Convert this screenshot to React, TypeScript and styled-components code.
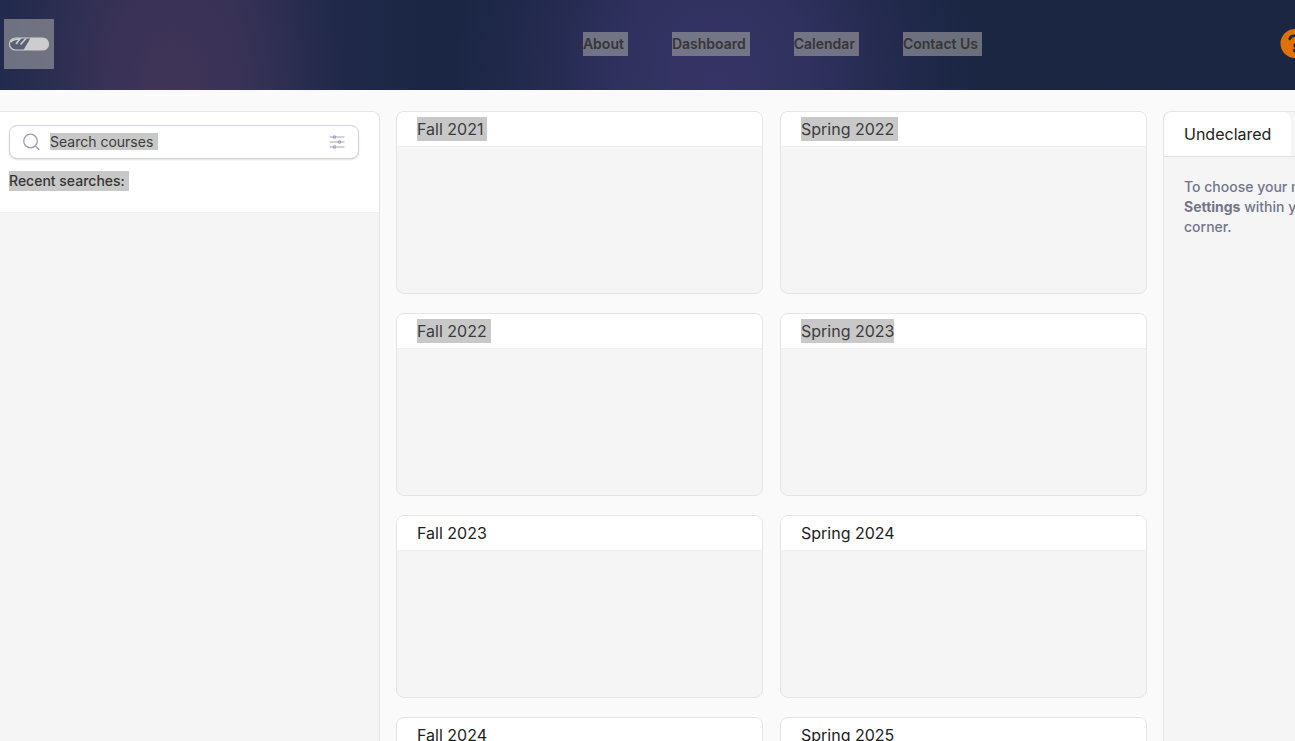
import React from "react";
import styled, { createGlobalStyle, css } from "styled-components";

const GlobalStyle = createGlobalStyle`
  *, *::before, *::after { box-sizing: border-box; }
  html, body, #root { height: 100%; }
  body {
    margin: 0;
    overflow: hidden;
    background: #fafafa;
    color: #212121;
    font-family: Inter, "Liberation Sans", sans-serif;
    font-size: 14px;
    line-height: 20px;
  }
`;

const selection = "rgba(163, 163, 163, 0.59)";

const Page = styled.div`
  display: flex;
  flex-direction: column;
  height: 100%;
  overflow: hidden;
`;

const Header = styled.header`
  display: flex;
  flex: none;
  align-items: center;
  height: 90px;
  padding: 0 0 2px 4px;
  overflow: hidden;
  background:
    radial-gradient(ellipse 170px 260px at 172px 84px, #3e3458 0%, rgba(62, 52, 88, 0.85) 35%, rgba(62, 52, 88, 0.35) 70%, rgba(62, 52, 88, 0) 100%),
    radial-gradient(ellipse 260px 300px at 715px 80px, #363466 0%, rgba(54, 52, 102, 0.8) 35%, rgba(54, 52, 102, 0.3) 70%, rgba(54, 52, 102, 0) 100%),
    linear-gradient(90deg, #222b4d 0, #262c50 240px, #1b2644 420px, #1a2642 100%);
`;

const Logo = styled.a`
  display: flex;
  flex: none;
  align-items: center;
  justify-content: center;
  width: 50px;
  height: 50px;
  background: ${selection};
`;

const Spacer = styled.div<{ $grow: number }>`
  flex: ${(p) => p.$grow} 1 0;
`;

const Nav = styled.nav`
  display: flex;
  gap: 44px;
`;

const NavLink = styled.a`
  padding-right: 4px;
  background: ${selection};
  color: #363636;
  font-weight: 600;
  line-height: 24px;
  text-decoration: none;
  white-space: nowrap;
`;

const HelpButton = styled.button`
  display: flex;
  flex: none;
  margin: 0 -15px 0 0;
  padding: 0;
  border: 0;
  background: none;
`;

const Main = styled.main`
  display: flex;
  flex: 1;
  gap: 16px;
  min-height: 0;
  padding-top: 21px;
`;

const panel = css`
  overflow: hidden;
  border: 1px solid #e5e5e5;
  background: #f5f5f5;
`;

const SearchPanel = styled.aside`
  ${panel}
  flex: none;
  width: 380px;
  border-width: 1px 1px 0 0;
  border-radius: 0 8px 0 0;
`;

const SearchArea = styled.form`
  padding: 13px 20px 21px 9px;
  border-bottom: 1px solid #f0f0f0;
  background: #fff;
`;

const SearchBox = styled.div`
  display: flex;
  align-items: center;
  height: 34px;
  padding: 0 13px;
  border: 1px solid #d0d2dd;
  border-radius: 8px;
  background: #fff;
  box-shadow: 0 1px 2px rgba(0, 0, 0, 0.12);
`;

const SearchInput = styled.input`
  flex: 1;
  min-width: 0;
  height: 18px;
  margin: 0 8px 0 10px;
  padding: 0;
  border: 0;
  outline: 0;
  background: linear-gradient(#c8c8c8, #c8c8c8) 0 0 / 108px 17px no-repeat;
  font: inherit;
  &::placeholder { color: #3c3c3c; opacity: 1; }
`;

const FilterButton = styled.button`
  display: flex;
  padding: 0;
  border: 0;
  background: none;
`;

const Recent = styled.h2`
  width: fit-content;
  margin: 12px 0 0;
  padding-right: 4px;
  background: #c8c8c8;
  color: #363636;
  font-size: 14px;
  font-weight: 500;
  line-height: 20px;
`;

const Semesters = styled.section`
  display: grid;
  flex: 1;
  grid-template-columns: 1fr 1fr;
  grid-auto-rows: 183px;
  gap: 19px 17px;
  min-width: 0;
`;

const Card = styled.article`
  ${panel}
  border-radius: 8px;
`;

const CardHead = styled.div`
  height: 35px;
  padding: 5px 20px;
  border-bottom: 1px solid #f0f0f0;
  background: #fff;
`;

const CardTitle = styled.h2<{ $selected?: boolean; $trail?: number }>`
  width: fit-content;
  margin: 0;
  padding-right: ${(p) => p.$trail ?? 0}px;
  background: ${(p) => (p.$selected ? "#c8c8c8" : "transparent")};
  color: ${(p) => (p.$selected ? "#3c3c3c" : "#212121")};
  font-size: 16px;
  font-weight: 400;
  line-height: 24px;
`;

const MajorPanel = styled.aside`
  ${panel}
  flex: none;
  width: 132px;
  border-width: 1px 0 0 1px;
  border-radius: 8px 0 0 0;
`;

const Tabs = styled.div`
  display: flex;
  border-bottom: 1px solid #e2e2e2;
`;

const Tab = styled.button`
  height: 44px;
  padding: 0 20px;
  border: 0;
  border-radius: 8px 8px 0 0;
  background: #fff;
  color: #212121;
  font: 400 16px/24px Inter, "Liberation Sans", sans-serif;
`;

const Hint = styled.p`
  margin: 0;
  padding: 20px;
  color: #737589;
  font-weight: 500;
  white-space: nowrap;
`;

const semesters = [
  { name: "Fall 2021", selected: true, trail: 4 },
  { name: "Spring 2022", selected: true, trail: 4 },
  { name: "Fall 2022", selected: true, trail: 4 },
  { name: "Spring 2023", selected: true },
  { name: "Fall 2023" },
  { name: "Spring 2024" },
  { name: "Fall 2024" },
  { name: "Spring 2025" },
];

const LogoMark = () => (
  <svg width="42" height="14" viewBox="0 0 42 14" aria-hidden="true">
    <rect x="1.500" y="1" width="39" height="12" rx="6" fill="#5d5f76" />
    <path d="M22.500 1H34.500a6 6 0 0 1 0 12H15.500Z" fill="#cdcdcf" />
    <path d="M3 5C4.500 2.300 7 1.800 12 1.800L8 7M18 1.500 12.500 7.500" stroke="#cdcdcf" strokeWidth="1.700" fill="none" />
    <rect x="1.500" y="1" width="39" height="12" rx="6" fill="none" stroke="#cdcdcf" strokeWidth="1.200" />
  </svg>
);

const HelpIcon = () => (
  <svg width="30" height="30" viewBox="0 0 30 30" aria-hidden="true">
    <circle cx="15" cy="14.500" r="14.500" fill="#e07000" />
    <path d="M9.800 9.800c.6-2 2-3 4-3h2.400c2.400 0 4 1.600 4 3.800 0 1.600-.8 2.600-2 3.300L15 15.800v1.500" fill="none" stroke="#1a2744" strokeWidth="2.800" strokeLinecap="round" />
    <circle cx="15" cy="21.500" r="1.900" fill="#1a2744" />
  </svg>
);

export default function App() {
  return (
    <Page>
      <GlobalStyle />
      <Header>
        <Logo href="#" aria-label="Home"><LogoMark /></Logo>
        <Spacer $grow={529} />
        <Nav>
          {["About", "Dashboard", "Calendar", "Contact Us"].map((label) => (
            <NavLink href="#" key={label}>{label}</NavLink>
          ))}
        </Nav>
        <Spacer $grow={298} />
        <HelpButton type="button" aria-label="Help"><HelpIcon /></HelpButton>
      </Header>
      <Main>
        <SearchPanel>
          <SearchArea>
            <SearchBox>
              <svg width="17" height="18" viewBox="0 0 17 18" fill="none" stroke="#9a9db5" strokeWidth="1.300" strokeLinecap="round" aria-hidden="true">
                <circle cx="7.500" cy="8" r="6.800" />
                <path d="m12.500 13 3.500 3.500" />
              </svg>
              <SearchInput type="text" aria-label="Search courses" placeholder="Search courses" />
              <FilterButton type="button" aria-label="Filters">
                <svg width="16" height="16" viewBox="0 0 16 16" fill="#d4d5df" stroke="#a4a6bc" strokeWidth="1.200" aria-hidden="true">
                  <path d="M.5 3h15M.5 8h15M.5 13h15" />
                  <circle cx="5.500" cy="3" r="1.200" />
                  <circle cx="10.500" cy="8" r="1.200" />
                  <circle cx="5.500" cy="13" r="1.200" />
                </svg>
              </FilterButton>
            </SearchBox>
            <Recent>Recent searches:</Recent>
          </SearchArea>
        </SearchPanel>
        <Semesters>
          {semesters.map((s) => (
            <Card key={s.name}>
              <CardHead>
                <CardTitle $selected={s.selected} $trail={s.trail}>{s.name}</CardTitle>
              </CardHead>
            </Card>
          ))}
        </Semesters>
        <MajorPanel>
          <Tabs><Tab type="button">Undeclared</Tab></Tabs>
          <Hint>
            To choose your major,<br />
            <strong>Settings</strong> within your<br />
            corner.
          </Hint>
        </MajorPanel>
      </Main>
    </Page>
  );
}
